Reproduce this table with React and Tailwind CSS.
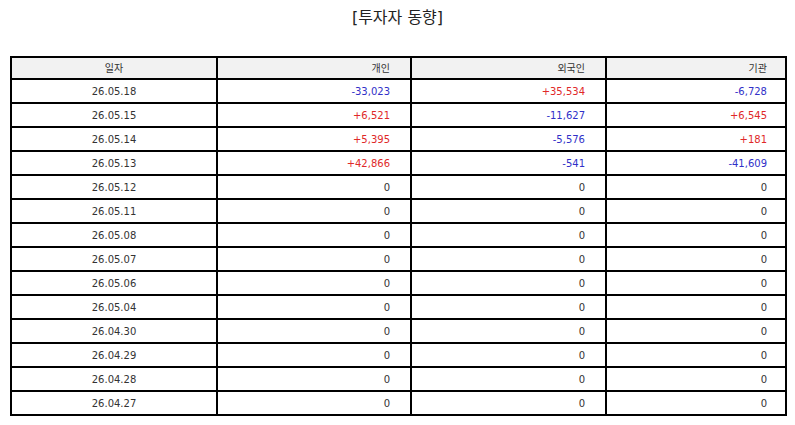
const rows = [
  ["26.05.18", "-33,023", "+35,534", "-6,728"],
  ["26.05.15", "+6,521", "-11,627", "+6,545"],
  ["26.05.14", "+5,395", "-5,576", "+181"],
  ["26.05.13", "+42,866", "-541", "-41,609"],
  ["26.05.12", "0", "0", "0"],
  ["26.05.11", "0", "0", "0"],
  ["26.05.08", "0", "0", "0"],
  ["26.05.07", "0", "0", "0"],
  ["26.05.06", "0", "0", "0"],
  ["26.05.04", "0", "0", "0"],
  ["26.04.30", "0", "0", "0"],
  ["26.04.29", "0", "0", "0"],
  ["26.04.28", "0", "0", "0"],
  ["26.04.27", "0", "0", "0"],
];

function tone(v) {
  if (v.startsWith("+")) return "text-[#e02828]";
  if (v.startsWith("-")) return "text-[#3030c8]";
  return "text-[#333]";
}

export default function App() {
  return (
    <div
      className="w-[795px] h-[425px] bg-white px-[10px] pt-[8px]"
      style={{ fontFamily: '"DejaVu Sans", "Noto Sans CJK KR", sans-serif' }}
    >
      <h1 className="text-center text-[16px] leading-[20px] text-[#222] h-[20px]">[투자자 동향]</h1>
      <table className="mt-[28px] w-[775px] border-collapse table-fixed text-[10px] text-[#333]">
        <colgroup>
          <col className="w-[206px]" />
          <col className="w-[194px]" />
          <col className="w-[195px]" />
          <col className="w-[180px]" />
        </colgroup>
        <thead>
          <tr className="h-[22px] bg-[#f2f2f2]">
            <th className="border-2 border-black font-normal text-center">일자</th>
            <th className="border-2 border-black font-normal text-right pr-[20px]">개인</th>
            <th className="border-2 border-black font-normal text-right pr-[20px]">외국인</th>
            <th className="border-2 border-black font-normal text-right pr-[18px]">기관</th>
          </tr>
        </thead>
        <tbody>
          {rows.map((r) => (
            <tr key={r[0]} className="h-[24px]">
              <td className="border-2 border-black text-center">{r[0]}</td>
              <td className={`border-2 border-black text-right pr-[20px] ${tone(r[1])}`}>{r[1]}</td>
              <td className={`border-2 border-black text-right pr-[20px] ${tone(r[2])}`}>{r[2]}</td>
              <td className={`border-2 border-black text-right pr-[18px] ${tone(r[3])}`}>{r[3]}</td>
            </tr>
          ))}
        </tbody>
      </table>
    </div>
  );
}
